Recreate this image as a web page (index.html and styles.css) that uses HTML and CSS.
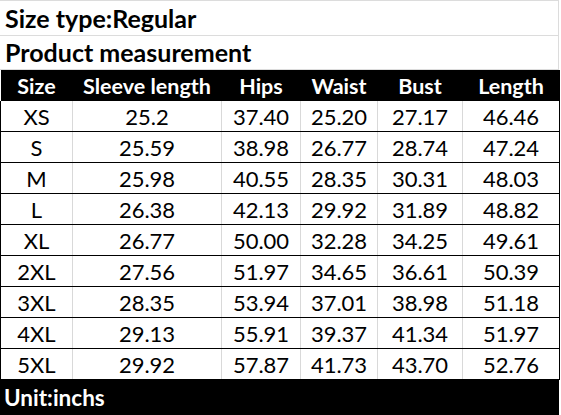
FILE: index.html
```html
<!DOCTYPE html>
<html>
<head>
<meta charset="utf-8">
<link rel="stylesheet" href="styles.css">
</head>
<body>
<div class="sheet">
  <div class="title first">Size type:Regular</div>
  <div class="title">Product measurement</div>
  <table class="chart">
    <colgroup>
      <col class="c1"><col class="c2"><col class="c3"><col class="c4"><col class="c5"><col class="c6">
    </colgroup>
    <thead>
      <tr><th>Size</th><th>Sleeve length</th><th>Hips</th><th>Waist</th><th>Bust</th><th>Length</th></tr>
    </thead>
    <tbody>
      <tr><td>XS</td><td>25.2</td><td>37.40</td><td>25.20</td><td>27.17</td><td>46.46</td></tr>
      <tr><td>S</td><td>25.59</td><td>38.98</td><td>26.77</td><td>28.74</td><td>47.24</td></tr>
      <tr><td>M</td><td>25.98</td><td>40.55</td><td>28.35</td><td>30.31</td><td>48.03</td></tr>
      <tr><td>L</td><td>26.38</td><td>42.13</td><td>29.92</td><td>31.89</td><td>48.82</td></tr>
      <tr><td>XL</td><td>26.77</td><td>50.00</td><td>32.28</td><td>34.25</td><td>49.61</td></tr>
      <tr><td>2XL</td><td>27.56</td><td>51.97</td><td>34.65</td><td>36.61</td><td>50.39</td></tr>
      <tr><td>3XL</td><td>28.35</td><td>53.94</td><td>37.01</td><td>38.98</td><td>51.18</td></tr>
      <tr><td>4XL</td><td>29.13</td><td>55.91</td><td>39.37</td><td>41.34</td><td>51.97</td></tr>
      <tr><td>5XL</td><td>29.92</td><td>57.87</td><td>41.73</td><td>43.70</td><td>52.76</td></tr>
    </tbody>
  </table>
  <div class="footer">Unit:inchs</div>
</div>
</body>
</html>
```
FILE: styles.css
```css
html, body {
  margin: 0;
  padding: 0;
  background: #ffffff;
}
.sheet {
  width: 559px;
  font-family: Lato, "Open Sans", "Liberation Sans", sans-serif;
  color: #000;
}
.title {
  box-sizing: border-box;
  height: 34px;
  padding-left: 5px;
  font-size: 25px;
  font-weight: 700;
  line-height: 33px;
  border-bottom: 1px solid #dcdcdc;
  border-right: 1px solid #dcdcdc;
}
.title.first {
  height: 36px;
  border-top: 1px solid #dcdcdc;
  line-height: 34px;
}
.chart {
  width: 559px;
  border-collapse: collapse;
  table-layout: fixed;
}
.c1 { width: 72px; }
.c2 { width: 149px; }
.c3 { width: 79px; }
.c4 { width: 77px; }
.c5 { width: 85px; }
.c6 { width: 97px; }
.chart th {
  background: #000;
  color: #fff;
  height: 31px;
  padding: 0;
  font-size: 21.5px;
  font-weight: 700;
  text-align: center;
}
.chart td {
  height: 30px;
  padding: 0;
  font-size: 22px;
  text-align: center;
  border-left: 1px solid #d9d9d9;
  border-bottom: 1px solid #000;
}
.chart td:first-child {
  border-left: 1px solid #000;
}
.chart td:last-child {
  border-right: 1px solid #000;
}
.footer {
  height: 35px;
  background: #000;
  color: #fff;
  font-size: 22.5px;
  font-weight: 700;
  line-height: 36px;
  padding-left: 4px;
}
```
